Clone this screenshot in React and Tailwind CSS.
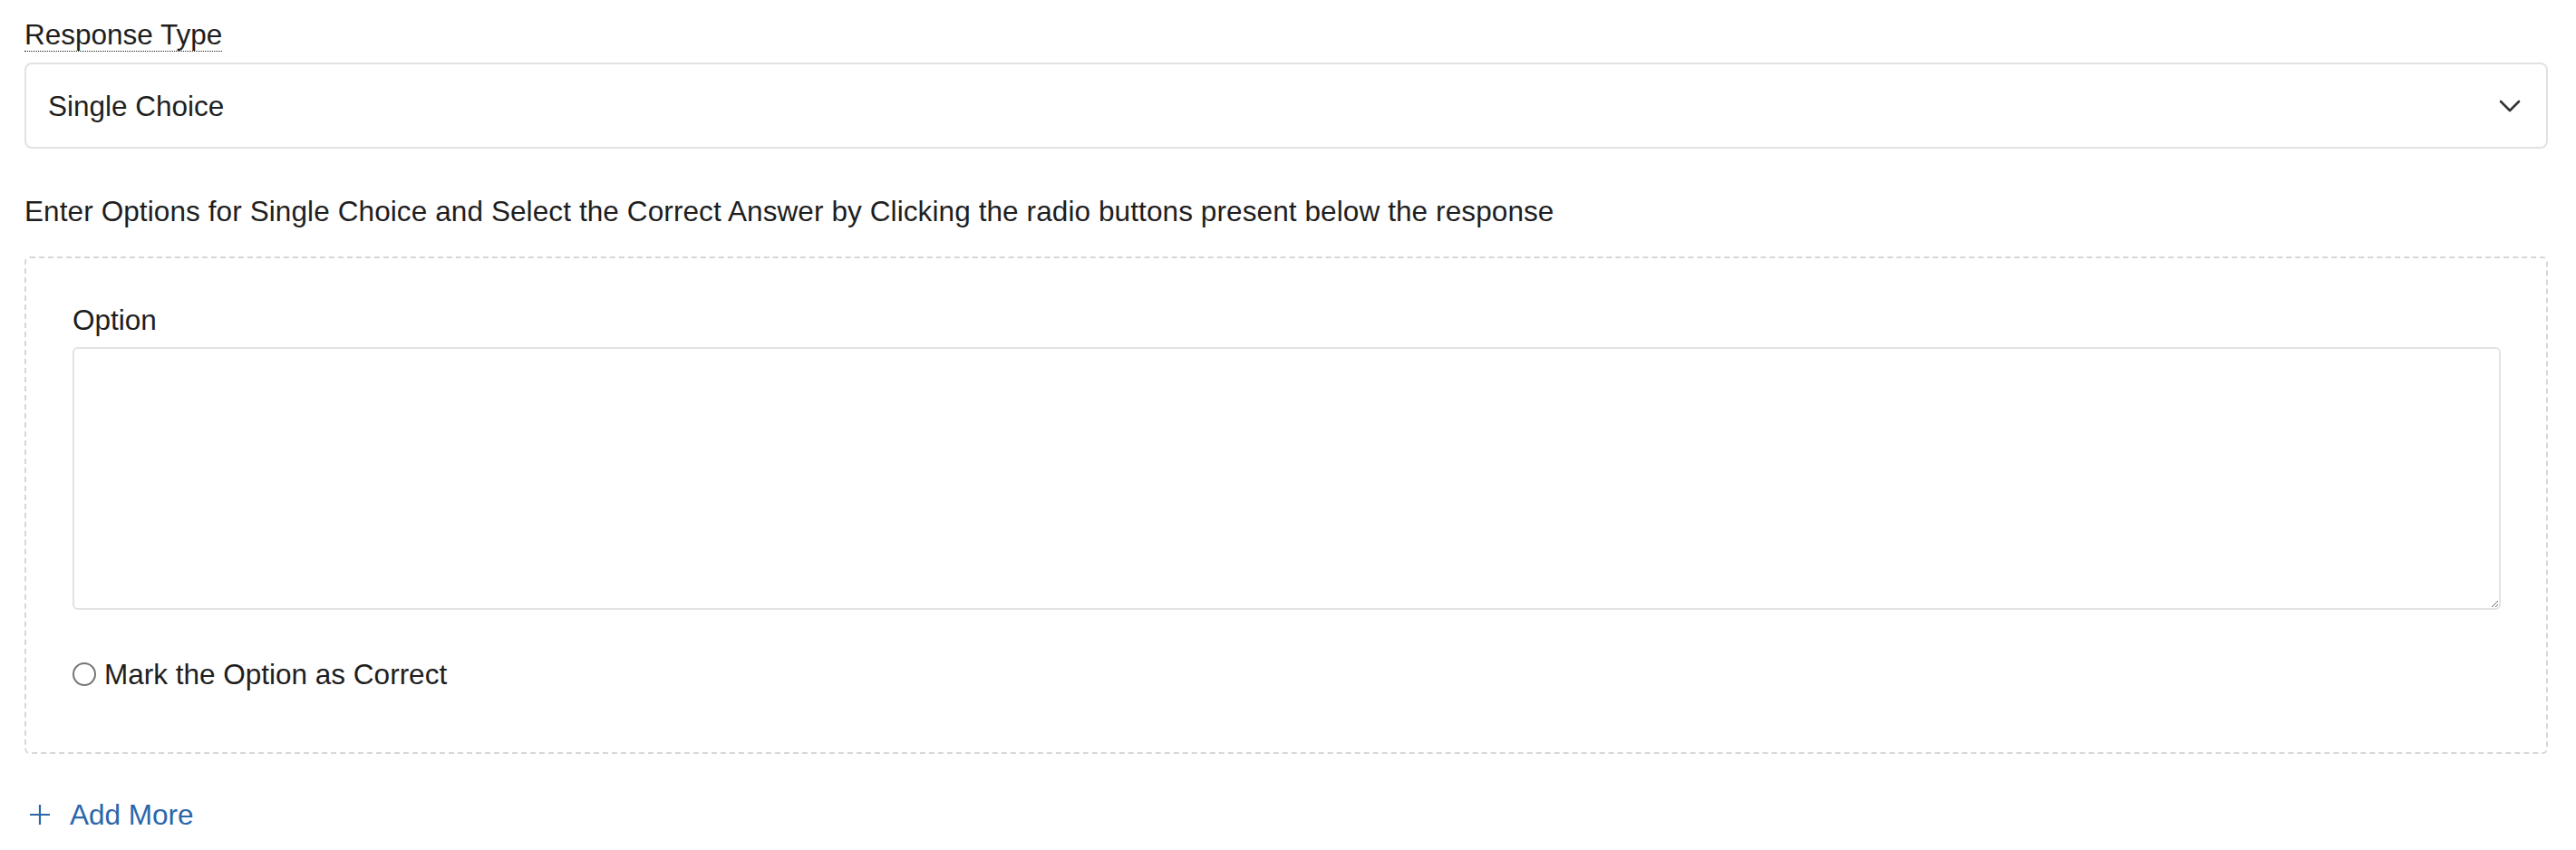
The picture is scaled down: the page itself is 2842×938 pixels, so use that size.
import { useState } from "react";

const ChevronDown = () => (
  <svg width="24" height="14" viewBox="0 0 24 14" fill="none">
    <path d="M2 2L12 12L22 2" stroke="#333333" strokeWidth="2.6" strokeLinecap="round" strokeLinejoin="round" />
  </svg>
);

const PlusIcon = () => (
  <svg width="24" height="24" viewBox="0 0 24 24" fill="none">
    <path d="M12 1V23M1 12H23" stroke="#2b66aa" strokeWidth="2.2" />
  </svg>
);

const App = () => {
  const [opcion, setOpcion] = useState("");
  const [correcta, setCorrecta] = useState(false);

  return (
    <div className="w-full h-[938px] bg-white pl-[27px] pr-[31px] pt-[20px] text-[31.5px] leading-[36px] text-[#1e1e1e] font-['Liberation_Sans',Arial,sans-serif]">
      <span className="inline-block border-b border-dotted border-[#222]">Response Type</span>

      {/* Select de tipo */}
      <div className="mt-[12px] h-[95px] flex items-center justify-between border-2 border-[#e2e2e2] rounded-[8px] pl-[24px] pr-[28px]">
        <span>Single Choice</span>
        <ChevronDown />
      </div>

      <p className="mt-[51px] tracking-[0.1px]">
        Enter Options for Single Choice and Select the Correct Answer by Clicking the radio buttons present below the response
      </p>

      {/* Caja de opciones */}
      <div className="mt-[32px] border-2 border-dashed border-[#d6d7da] rounded-[6px] pl-[51px] pr-[50px] pt-[50px] pb-[68px]">
        <label className="block">Option</label>
        <textarea
          className="block mt-[12px] w-full h-[290px] border-2 border-[#e2e3e5] rounded-[6px] bg-white focus:outline-none"
          value={opcion}
          onChange={(e) => setOpcion(e.target.value)}
        />
        <label className="mt-[53px] flex items-center gap-[9px]">
          <input
            type="radio"
            checked={correcta}
            onChange={() => setCorrecta(!correcta)}
            className="appearance-none w-[26px] h-[26px] rounded-full border-2 border-[#767676] bg-white checked:bg-[#2b66aa]"
          />
          <span>Mark the Option as Correct</span>
        </label>
      </div>

      <button type="button" className="mt-[49px] ml-[5px] flex items-center gap-[21px] text-[#2b66aa]">
        <PlusIcon />
        <span>Add More</span>
      </button>
    </div>
  );
};

export default App;
